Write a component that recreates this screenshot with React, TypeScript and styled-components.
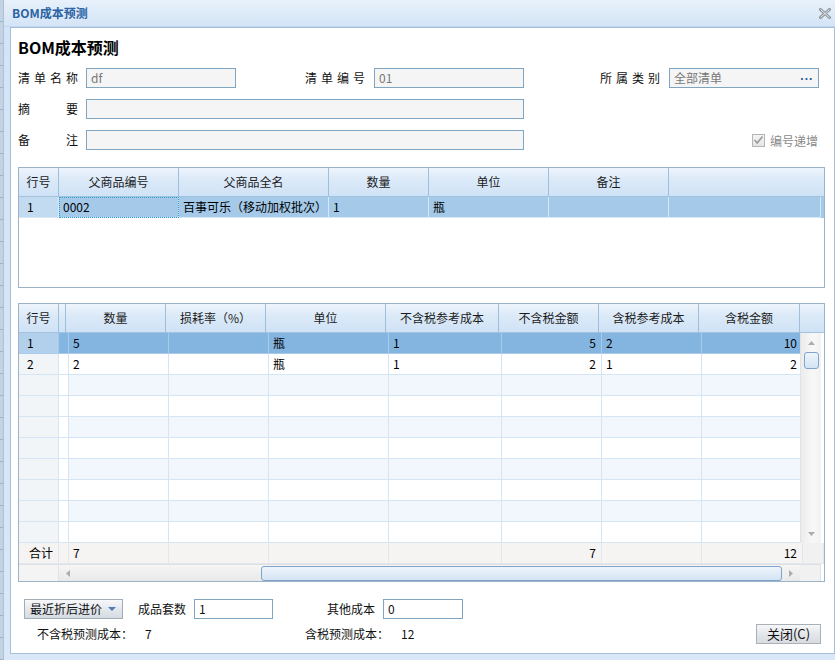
import styled, { createGlobalStyle } from "styled-components";

const GlobalStyle = createGlobalStyle`
  html, body { margin: 0; padding: 0; }
  body {
    font-family: "Noto Sans CJK SC", sans-serif;
    font-size: 12px;
    color: #111;
    background: #fff;
  }
  * { box-sizing: border-box; }
`;

const Page = styled.div`
  width: 835px;
  height: 660px;
  display: flex;
  overflow: hidden;
`;

const BackStrip = styled.div`
  width: 3px;
  flex-shrink: 0;
  background: repeating-linear-gradient(to bottom, #c4d3e2 0 21px, #9fb4c9 21px 22px);
`;

const Win = styled.div`
  flex: 1;
  display: flex;
  flex-direction: column;
  background: linear-gradient(#e8f1fb, #d3e4f6 27px, #d9e7f6);
  border-left: 1px solid #a9c2da;
`;

const TitleBar = styled.div`
  height: 27px;
  flex-shrink: 0;
  display: flex;
  align-items: center;
  justify-content: space-between;
  padding: 0 6px 0 8px;
  border-bottom: 1px solid #c1d6ec;
`;

const TitleText = styled.span`
  font-weight: bold;
  font-size: 12px;
  color: #2b63a3;
  line-height: 16px;
`;

const Panel = styled.div`
  flex: 1;
  margin: 0 2px 6px 6px;
  background: #fff;
  border: 1px solid #a3bfdb;
  padding: 9px 9px 0 7px;
  display: flex;
  flex-direction: column;
`;

const Heading = styled.div`
  font-size: 16px;
  font-weight: bold;
  line-height: 20px;
  height: 20px;
  color: #000;
`;

const Form = styled.div`
  margin-top: 11px;
  display: grid;
  grid-template-columns: 68px 150px 138px 150px 145px 150px;
  grid-auto-rows: 20px;
  row-gap: 11px;
  align-items: center;
`;

const Label = styled.span<{ $right?: boolean }>`
  width: 60px;
  display: flex;
  justify-content: space-between;
  line-height: 20px;
  color: #111;
  justify-self: ${p => (p.$right ? "end" : "start")};
  margin-right: ${p => (p.$right ? "9px" : "0")};
`;

const Field = styled.div<{ $span?: number; $white?: boolean }>`
  grid-column: span ${p => p.$span || 1};
  height: 20px;
  border: 1px solid #7fa5c1;
  background: ${p => (p.$white ? "#fff" : "#f5f5f5")};
  display: flex;
  align-items: center;
  justify-content: space-between;
  padding: 0 5px 0 4px;
  color: #777;
  font-size: 12px;
  line-height: 18px;
`;

const Dots = styled.span`
  color: #2f5f9a;
  font-weight: bold;
  font-family: "DejaVu Sans", sans-serif;
  font-size: 10px;
  letter-spacing: 0.5px;
  line-height: 12px;
  padding-bottom: 2px;
`;

const Check = styled.div`
  grid-column: 5 / span 2;
  justify-self: end;
  display: flex;
  align-items: center;
  gap: 5px;
  color: #8a8a8a;
  margin-right: 1px;
`;

const Box = styled.span`
  width: 13px;
  height: 13px;
  border: 1px solid #b5b5b5;
  background: linear-gradient(#f3f3f3, #e6e6e6);
  display: flex;
  align-items: center;
  justify-content: center;
`;

const GridBox = styled.div<{ $h: number; $mt: number }>`
  margin-top: ${p => p.$mt}px;
  height: ${p => p.$h}px;
  flex-shrink: 0;
  border: 1px solid #9cb2c6;
  background: #fff;
  display: flex;
  flex-direction: column;
  overflow: hidden;
`;

const HeadRow = styled.div`
  display: flex;
  height: 29px;
  flex-shrink: 0;
  background: linear-gradient(#eef5fd, #dceaf8 40%, #cfe2f6);
  border-bottom: 1px solid #a3c2de;
`;

const HeadCell = styled.div<{ $w: number; $last?: boolean }>`
  width: ${p => p.$w}px;
  flex-shrink: 0;
  border-right: ${p => (p.$last ? "none" : "1px solid #9fbedb")};
  display: flex;
  align-items: center;
  justify-content: center;
  color: #1b1b1b;
  line-height: 16px;
`;

const Row = styled.div<{ $bg: string }>`
  display: flex;
  height: 21px;
  flex-shrink: 0;
  background: ${p => p.$bg};
`;

const Cell = styled.div<{
  $w: number;
  $bg?: string;
  $align?: string;
  $line: string;
  $focus?: boolean;
  $pl?: number;
}>`
  width: ${p => p.$w}px;
  flex-shrink: 0;
  height: 21px;
  background: ${p => p.$bg || "transparent"};
  border-right: 1px solid ${p => p.$line};
  border-bottom: 1px solid ${p => p.$line};
  outline: ${p => (p.$focus ? "1px dotted #2c9ccc" : "none")};
  outline-offset: -1px;
  display: flex;
  align-items: center;
  justify-content: ${p => p.$align || "flex-start"};
  padding: 0 5px 0 ${p => p.$pl ?? 4}px;
  line-height: 16px;
  color: #000;
  white-space: nowrap;
  overflow: hidden;
`;

const BodyWrap = styled.div`
  display: flex;
  height: 210px;
  flex-shrink: 0;
`;

const Rows = styled.div`
  width: 781px;
  display: flex;
  flex-direction: column;
`;

const VScroll = styled.div`
  width: 21px;
  display: flex;
  flex-direction: column;
  align-items: center;
  background: linear-gradient(to right, #ececec, #f8f8f8 60%, #f1f1f1);
  border-left: 1px solid #e2e2e2;
`;

const ArrowBox = styled.div<{ $w: number; $h: number }>`
  width: ${p => p.$w}px;
  height: ${p => p.$h}px;
  flex-shrink: 0;
  display: flex;
  align-items: center;
  justify-content: center;
`;

const Thumb = styled.div<{ $w: number; $h: number }>`
  width: ${p => p.$w}px;
  height: ${p => p.$h}px;
  flex-shrink: 0;
  border: 1px solid #7fa3cc;
  border-radius: 3px;
  background: linear-gradient(#eef4fb, #d4e4f4);
`;

const Fill = styled.div`
  flex: 1;
`;

const HScrollRow = styled.div`
  display: flex;
  height: 17px;
  flex-shrink: 0;
`;

const HTrack = styled.div`
  width: 741px;
  display: flex;
  align-items: center;
  background: linear-gradient(#f6f6f6, #e9e9e9);
  border-top: 1px solid #e0e0e0;
`;

const Plain = styled.div<{ $w: number; $bg: string }>`
  width: ${p => p.$w}px;
  flex-shrink: 0;
  background: ${p => p.$bg};
  border-top: 1px solid #e0e0e0;
  border-right: 1px solid #dde3ea;
`;

const Bottom = styled.div`
  margin-top: 17px;
  display: grid;
  grid-template-columns: 114px 56px 79px 110px 80px;
  grid-auto-rows: 20px;
  align-items: center;
  padding-left: 6px;
`;

const DropBtn = styled.div`
  width: 99px;
  height: 20px;
  border: 1px solid #a3adb8;
  background: linear-gradient(#f7f8fa, #e4e8ed 50%, #d6dce3);
  display: flex;
  align-items: center;
  justify-content: space-between;
  padding: 0 6px 0 5px;
  color: #111;
  line-height: 16px;
`;

const Caret = styled.span`
  width: 0;
  height: 0;
  border-left: 4px solid transparent;
  border-right: 4px solid transparent;
  border-top: 4px solid #4f7db5;
`;

const Txt = styled.span<{ $right?: boolean; $pr?: number }>`
  line-height: 16px;
  color: #111;
  justify-self: ${p => (p.$right ? "end" : "start")};
  margin-right: ${p => p.$pr || 0}px;
`;

const Summary = styled.div`
  margin-top: 5px;
  display: grid;
  grid-template-columns: 108px 160px 96px 1fr auto;
  height: 20px;
  align-items: center;
  padding-left: 19px;
  padding-right: 4px;
`;

const CloseBtn = styled.div`
  width: 65px;
  height: 20px;
  border: 1px solid #a8b0b8;
  background: linear-gradient(#f6f7f8, #e3e6ea 50%, #d8dce1);
  display: flex;
  align-items: center;
  justify-content: center;
  line-height: 16px;
  color: #111;
  font-size: 13px;
`;

const grid1Cols = [
  { t: "行号", w: 40 },
  { t: "父商品编号", w: 120 },
  { t: "父商品全名", w: 150 },
  { t: "数量", w: 100 },
  { t: "单位", w: 120 },
  { t: "备注", w: 120 },
  { t: "", w: 152 },
];

const grid2Cols = [
  { t: "行号", w: 40 },
  { t: "", w: 7 },
  { t: "数量", w: 100 },
  { t: "损耗率（%）", w: 100 },
  { t: "单位", w: 120 },
  { t: "不含税参考成本", w: 113 },
  { t: "不含税金额", w: 100 },
  { t: "含税参考成本", w: 100 },
  { t: "含税金额", w: 101 },
];

const rightCols = [6, 8];

const grid2Data: string[][] = [
  ["1", "", "5", "", "瓶", "1", "5", "2", "10"],
  ["2", "", "2", "", "瓶", "1", "2", "1", "2"],
];

function SpacedLabel({ text, right }: { text: string; right?: boolean }) {
  return (
    <Label $right={right}>
      {[...text].map((c, i) => (
        <span key={i}>{c}</span>
      ))}
    </Label>
  );
}

function CloseIcon() {
  return (
    <svg width="12" height="11" viewBox="0 0 12 11">
      <path d="M1.5 1.5 L10.5 9.5 M10.5 1.5 L1.5 9.5" stroke="#8e959c" strokeWidth="3" strokeLinecap="square" />
      <path d="M1.5 1.5 L10.5 9.5 M10.5 1.5 L1.5 9.5" stroke="#e9edf1" strokeWidth="1" />
    </svg>
  );
}

function Tri({ dir }: { dir: "up" | "down" | "left" | "right" }) {
  const pts = {
    up: "0,4 3.5,0 7,4",
    down: "0,0 3.5,4 7,0",
    left: "4,0 0,3.5 4,7",
    right: "0,0 4,3.5 0,7",
  }[dir];
  const vert = dir === "up" || dir === "down";
  return (
    <svg width={vert ? 7 : 4} height={vert ? 4 : 7}>
      <polygon points={pts} fill="#a9adb2" />
    </svg>
  );
}

function Grid1() {
  const line = "#d6e7f5";
  return (
    <GridBox $h={121} $mt={17}>
      <HeadRow>
        {grid1Cols.map((c, i) => (
          <HeadCell key={i} $w={c.w} $last={i === grid1Cols.length - 1}>
            {c.t}
          </HeadCell>
        ))}
      </HeadRow>
      <Row $bg="#a4c9e9">
        <Cell $w={40} $bg="#c3dbf0" $line={line} $pl={8}>1</Cell>
        <Cell $w={120} $line={line} $focus>0002</Cell>
        <Cell $w={150} $line={line}>百事可乐（移动加权批次）</Cell>
        <Cell $w={100} $line={line}>1</Cell>
        <Cell $w={120} $line={line}>瓶</Cell>
        <Cell $w={120} $line={line}></Cell>
        <Cell $w={152} $line={line}></Cell>
      </Row>
    </GridBox>
  );
}

function Grid2() {
  const line = "#d5e5f4";
  const rows = Array.from({ length: 10 }, (_, i) => grid2Data[i] || Array(9).fill(""));
  const sum: Record<number, string> = { 0: "合计", 2: "7", 6: "7", 8: "12" };
  return (
    <GridBox $h={279} $mt={15}>
      <HeadRow>
        {grid2Cols.map((c, i) => (
          <HeadCell key={i} $w={c.w}>
            {c.t}
          </HeadCell>
        ))}
        <HeadCell $w={21} $last></HeadCell>
      </HeadRow>
      <BodyWrap>
        <Rows>
          {rows.map((r, ri) => {
            const sel = ri === 0;
            const bg = sel ? "#84b5e0" : ri % 2 === 0 ? "#f1f7fd" : "#fff";
            return (
              <Row key={ri} $bg={bg}>
                {grid2Cols.map((c, ci) => {
                  let cbg: string | undefined;
                  if (ci === 0) cbg = sel ? "#b2d0eb" : "#f2f5f8";
                  if (ci === 1 && !sel) cbg = "#fff";
                  return (
                    <Cell
                      key={ci}
                      $w={c.w}
                      $bg={cbg}
                      $pl={ci === 0 ? 8 : 4}
                      $line={sel ? "#a9cbe9" : line}
                      $align={rightCols.includes(ci) ? "flex-end" : "flex-start"}
                    >
                      {r[ci]}
                    </Cell>
                  );
                })}
              </Row>
            );
          })}
        </Rows>
        <VScroll>
          <ArrowBox $w={19} $h={19}>
            <Tri dir="up" />
          </ArrowBox>
          <Thumb $w={15} $h={17} />
          <Fill />
          <ArrowBox $w={19} $h={18}>
            <Tri dir="down" />
          </ArrowBox>
        </VScroll>
      </BodyWrap>
      <Row $bg="#f5f4f2">
        {grid2Cols.map((c, ci) => (
          <Cell
            key={ci}
            $w={c.w}
            $line="#e1e7ee"
            $align={ci === 0 || rightCols.includes(ci) ? "flex-end" : "flex-start"}
          >
            {sum[ci] || ""}
          </Cell>
        ))}
        <Cell $w={21} $line="#e1e7ee" $bg="#f1f1f1"></Cell>
      </Row>
      <HScrollRow>
        <Plain $w={40} $bg="#f4f4f4" />
        <HTrack>
          <ArrowBox $w={18} $h={15}>
            <Tri dir="left" />
          </ArrowBox>
          <Fill />
          <Thumb $w={521} $h={15} />
          <ArrowBox $w={18} $h={15}>
            <Tri dir="right" />
          </ArrowBox>
        </HTrack>
        <Plain $w={21} $bg="#f1f1f1" />
      </HScrollRow>
    </GridBox>
  );
}

export default function App() {
  return (
    <Page>
      <GlobalStyle />
      <BackStrip />
      <Win>
        <TitleBar>
          <TitleText>BOM成本预测</TitleText>
          <CloseIcon />
        </TitleBar>
        <Panel>
          <Heading>BOM成本预测</Heading>
          <Form>
            <SpacedLabel text="清单名称" />
            <Field>df</Field>
            <SpacedLabel text="清单编号" right />
            <Field>01</Field>
            <SpacedLabel text="所属类别" right />
            <Field>
              全部清单
              <Dots>...</Dots>
            </Field>

            <SpacedLabel text="摘要" />
            <Field $span={3} />
            <span />
            <span />

            <SpacedLabel text="备注" />
            <Field $span={3} />
            <Check>
              <Box>
                <svg width="11" height="10" viewBox="0 0 11 10">
                  <path d="M1.5 5 L4.2 8 L9.5 1.5" stroke="#9a9a9a" strokeWidth="1.6" fill="none" />
                </svg>
              </Box>
              编号递增
            </Check>
          </Form>

          <Grid1 />
          <Grid2 />

          <Bottom>
            <DropBtn>
              最近折后进价
              <Caret />
            </DropBtn>
            <Txt>成品套数</Txt>
            <Field $white>
              <Txt>1</Txt>
            </Field>
            <Txt $right $pr={8}>其他成本</Txt>
            <Field $white>
              <Txt>0</Txt>
            </Field>
          </Bottom>
          <Summary>
            <Txt>不含税预测成本：</Txt>
            <Txt>7</Txt>
            <Txt>含税预测成本：</Txt>
            <Txt>12</Txt>
            <CloseBtn>关闭(C)</CloseBtn>
          </Summary>
        </Panel>
      </Win>
    </Page>
  );
}
